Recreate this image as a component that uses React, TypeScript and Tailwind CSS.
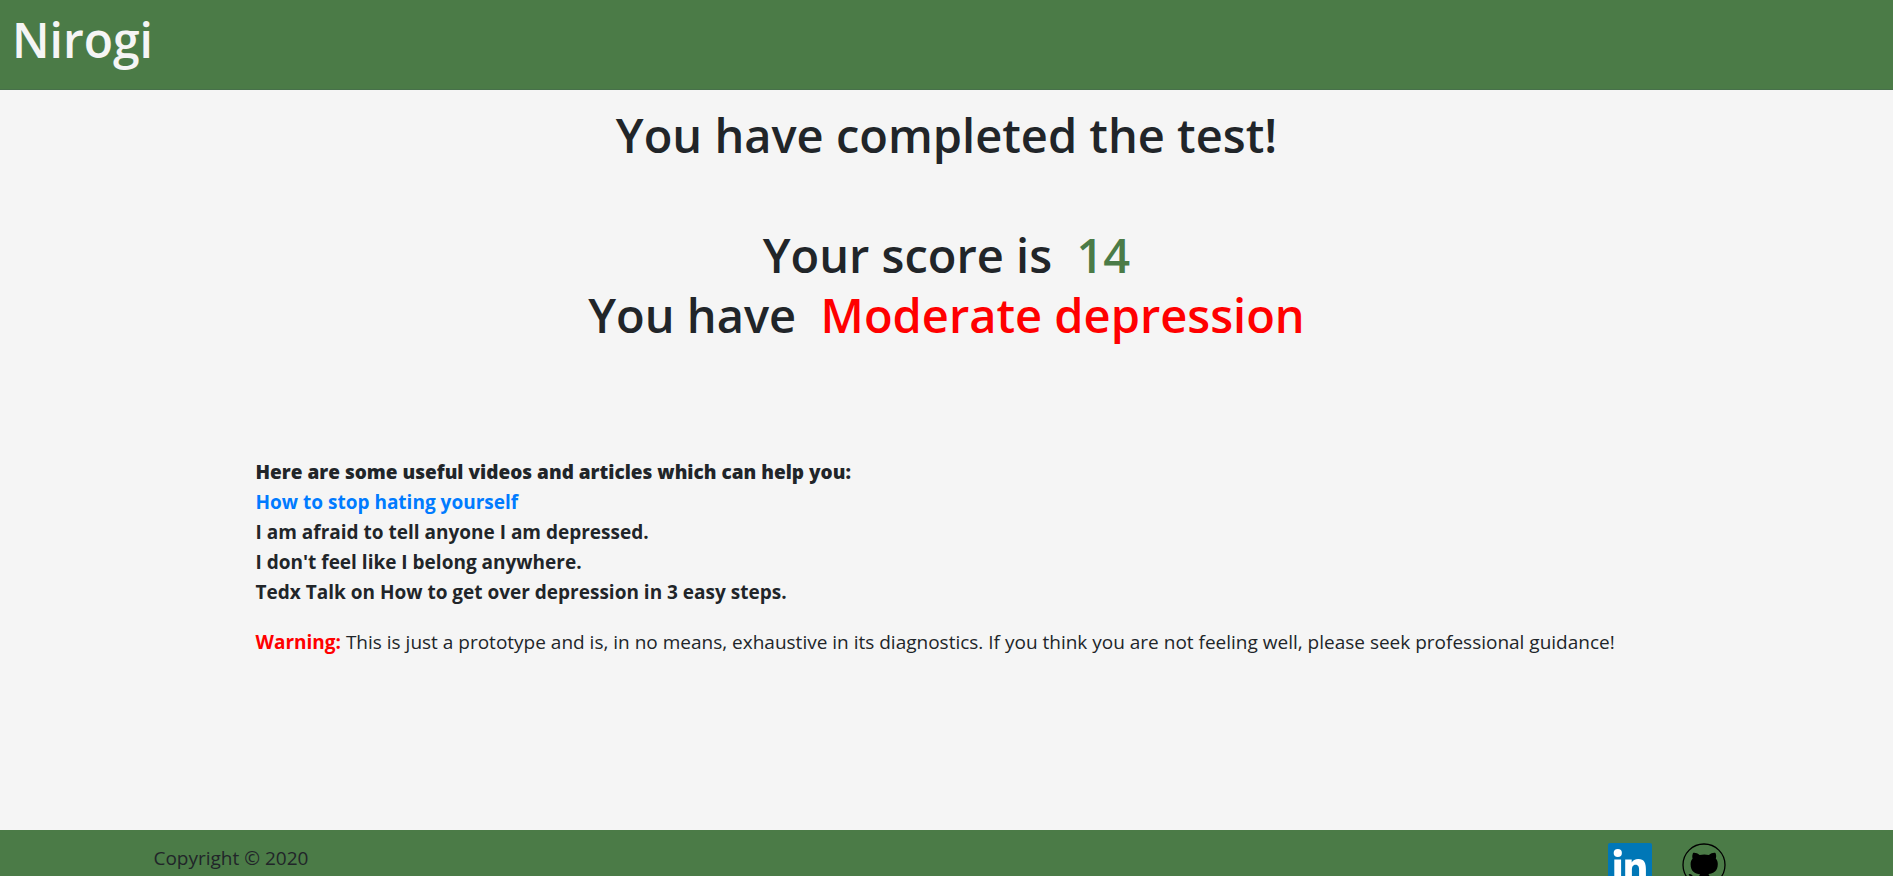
const resources = [
  "I am afraid to tell anyone I am depressed.",
  "I don't feel like I belong anywhere.",
  "Tedx Talk on How to get over depression in 3 easy steps.",
];

function LinkedInIcon() {
  return (
    <svg viewBox="0 0 44 44" className="h-11 w-11" aria-hidden="true">
      <rect width="44" height="44" rx="2" fill="#0077b7" />
      <circle cx="9.8" cy="10" r="4.1" fill="#fff" />
      <path
        fill="#fff"
        d="M6.3 16.5h6.8V38H6.3zM17.2 16.5h6.5v3c1.2-2 3.4-3.5 6.6-3.5 6 0 7.6 4 7.6 10v12h-6.8V27c0-3-.7-5.3-3.5-5.3-2.9 0-3.7 2.3-3.7 5.2V38h-6.7z"
      />
    </svg>
  );
}

function GitHubIcon() {
  return (
    <svg viewBox="0 0 44 44" className="h-11 w-11" aria-hidden="true">
      <circle cx="22" cy="22" r="21" fill="none" stroke="#000" strokeWidth="1.3" />
      <path
        fill="#000"
        d="M11 10c2-.6 4.5 .5 6.6 1.900a22 22 0 0 1 9.300 0c2.100-1.400 4.600-2.500 6.600-1.900.9 2.200.8 4 .3 5.500 1.400 1.600 2 3.300 2 5.600 0 7.200-4.300 9.300-9.500 10 1 1 1.400 2.300 1.400 4V41.500a21 21 0 0 1-11 0V38.500c-5 1-6.500-1.700-7.500-3.700-.5-1-1.200-1.900-2.100-2.600-.7-.5-.6-1.100.3-1.200 2.100-.1 3.300 1.700 4 2.800 1.400 2.200 3.500 2.100 5.300 1.400.1-1.800.6-3.100 1.400-4-5.200-.7-9.500-2.800-9.500-10 0-2.300.7-4 2-5.600-.5-1.500-.5-3.300.4-5.600z"
      />
    </svg>
  );
}

export default function App() {
  return (
    <div className="flex min-h-screen flex-col bg-[#f5f5f5] font-['Segoe_UI','Open_Sans',sans-serif] text-[19px] leading-[30px] text-[#212529]">
      <header className="border-b border-[#47704a] bg-[#4b7b47] px-3 pt-2.5 pb-[19px]">
        <h1 className="text-5xl leading-[60px] font-semibold text-[#f5f5f5]">Nirogi</h1>
      </header>

      <main className="flex-1 pt-[15px] pb-[173px]">
        <section className="text-center text-[47px] leading-[60px] font-semibold">
          <h2>You have completed the test!</h2>
          <p className="pt-[60px]">
            Your score is&nbsp; <span className="text-[#4b7b47]">14</span>
          </p>
          <p>
            You have&nbsp; <span className="text-[#ff0000]">Moderate depression</span>
          </p>
        </section>

        <section className="px-[13.5%] pt-28">
          <h3 className="font-extrabold">Here are some useful videos and articles which can help you:</h3>
          <ul className="font-bold">
            <li>
              <a href="#hating-yourself" className="text-[#007bff]">
                How to stop hating yourself
              </a>
            </li>
            {resources.map((title) => (
              <li key={title}>{title}</li>
            ))}
          </ul>
          <p className="pt-5">
            <strong className="font-bold text-[#ff0000]">Warning:</strong> This is just a prototype and is, in no means,
            exhaustive in its diagnostics. If you think you are not feeling well, please seek professional guidance!
          </p>
        </section>
      </main>

      <footer className="flex items-start justify-between bg-[#4b7b47] px-[8%] pt-[13px] pb-5">
        <p className="pl-0.5">Copyright © 2020</p>
        <div className="flex gap-[30px] pr-4">
          <a href="#linkedin" aria-label="LinkedIn">
            <LinkedInIcon />
          </a>
          <a href="#github" aria-label="GitHub">
            <GitHubIcon />
          </a>
        </div>
      </footer>
    </div>
  );
}
